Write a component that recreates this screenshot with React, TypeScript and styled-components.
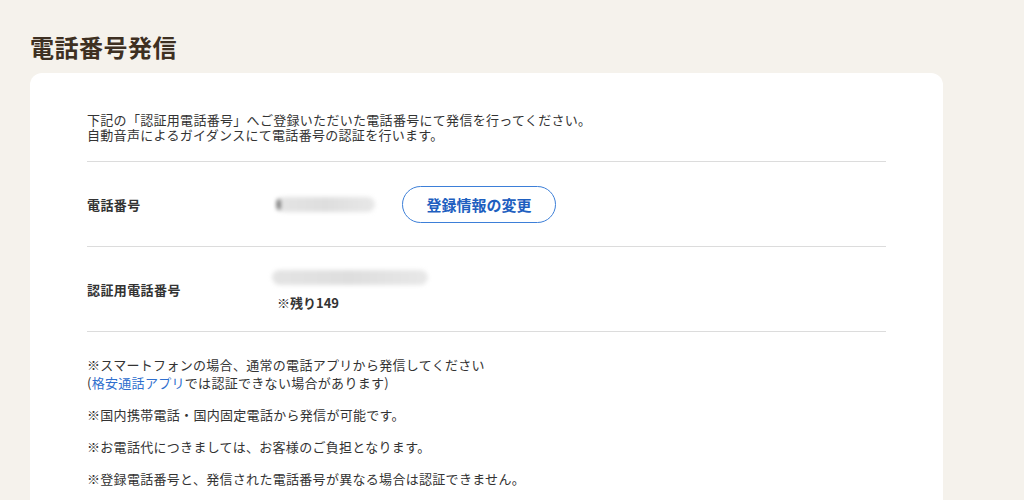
import React from 'react';
import styled, { createGlobalStyle } from 'styled-components';

const GlobalStyle = createGlobalStyle`
  html, body {
    margin: 0;
    padding: 0;
    background: #f5f2ec;
  }
  body {
    font-family: 'Noto Sans CJK JP', 'Noto Sans', sans-serif;
    color: #333333;
  }
`;

const Page = styled.div`
  padding: 31px 81px 0 30px;
`;

const Title = styled.h1`
  margin: 0 0 10px;
  font-size: 24px;
  line-height: 32px;
  font-weight: 700;
  color: #3e3022;
  letter-spacing: 0.5px;
`;

const Card = styled.section`
  background: #ffffff;
  border-radius: 12px;
  padding: 39px 57px 40px;
  min-height: 460px;
`;

const Intro = styled.p`
  margin: 0;
  padding-bottom: 19px;
  font-size: 13px;
  line-height: 15px;
  letter-spacing: 0.3px;
  border-bottom: 1px solid #dcdcdc;
`;

const Row = styled.div`
  display: grid;
  grid-template-columns: 190px 1fr;
  align-items: center;
  height: 84px;
  border-bottom: 1px solid #dcdcdc;
`;

const Label = styled.div`
  font-size: 13px;
  font-weight: 700;
  letter-spacing: 0.4px;
  color: #333333;
`;

const Value = styled.div`
  display: flex;
  align-items: center;
`;

const ValueStack = styled.div`
  display: flex;
  flex-direction: column;
  align-items: flex-start;
  padding-top: 3px;
`;

const Masked = styled.div<{ $w: number; $shift?: number }>`
  position: relative;
  width: ${(p) => p.$w}px;
  height: 15px;
  margin-left: ${(p) => p.$shift ?? 0}px;
  border-radius: 8px;
  background: linear-gradient(90deg, #e4e4e4, #dedede 50%, #e8e8e8);
  filter: blur(2px);
`;

const Edge = styled.span`
  position: absolute;
  left: 0;
  top: 2px;
  width: 3px;
  height: 11px;
  border-radius: 3px 0 0 3px;
  background: #444;
`;

const ChangeButton = styled.button`
  margin-left: 27px;
  width: 154px;
  height: 37px;
  border: 1px solid #3d7fd8;
  border-radius: 19px;
  background: #ffffff;
  color: #1e5fc0;
  font-family: inherit;
  font-size: 15px;
  font-weight: 700;
  cursor: pointer;
`;

const Remaining = styled.div`
  margin-top: 8px;
  font-size: 13px;
  font-weight: 700;
  color: #333333;
`;

const Notes = styled.div`
  padding-top: 24px;
  display: flex;
  flex-direction: column;
  gap: 14px;
`;

const Note = styled.p`
  margin: 0;
  font-size: 13px;
  line-height: 18px;
  letter-spacing: 0.3px;
`;

const Link = styled.a`
  color: #2f6fce;
  text-decoration: none;
`;

export default function App() {
  return (
    <>
      <GlobalStyle />
      <Page>
        <Title>電話番号発信</Title>
        <Card>
          <Intro>
            下記の「認証用電話番号」へご登録いただいた電話番号にて発信を行ってください。
            <br />
            自動音声によるガイダンスにて電話番号の認証を行います。
          </Intro>

          <Row>
            <Label>電話番号</Label>
            <Value>
              <Masked $w={98}>
                <Edge />
              </Masked>
              <ChangeButton>登録情報の変更</ChangeButton>
            </Value>
          </Row>

          <Row>
            <Label>認証用電話番号</Label>
            <ValueStack>
              <Masked $w={156} $shift={-5} />
              <Remaining>※残り149</Remaining>
            </ValueStack>
          </Row>

          <Notes>
            <Note>
              ※スマートフォンの場合、通常の電話アプリから発信してください
              <br />
              (<Link href="#">格安通話アプリ</Link>では認証できない場合があります)
            </Note>
            <Note>※国内携帯電話・国内固定電話から発信が可能です。</Note>
            <Note>※お電話代につきましては、お客様のご負担となります。</Note>
            <Note>※登録電話番号と、発信された電話番号が異なる場合は認証できません。</Note>
          </Notes>
        </Card>
      </Page>
    </>
  );
}
